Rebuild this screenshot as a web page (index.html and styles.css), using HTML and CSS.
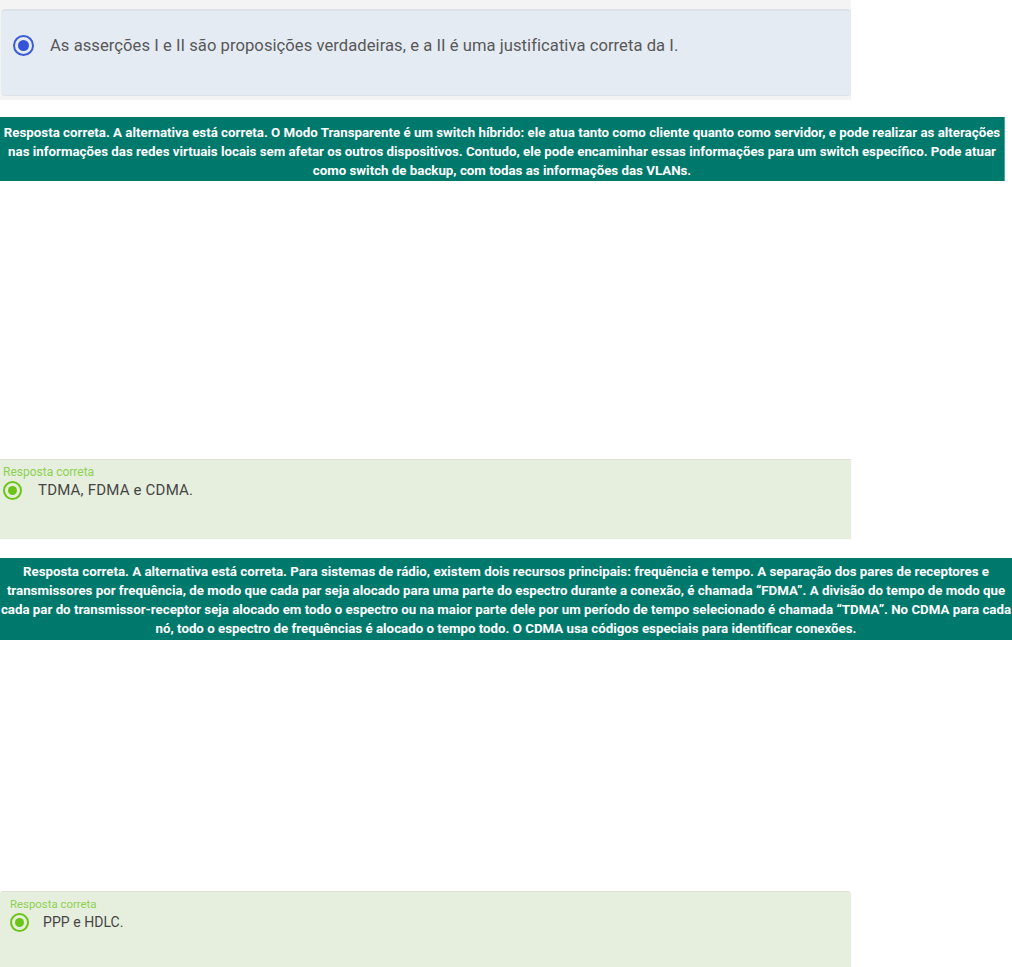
FILE: index.html
```html
<!DOCTYPE html>
<html lang="pt-BR">
<head>
    <meta charset="UTF-8">
    <meta name="viewport" content="width=device-width, initial-scale=1.0">
    <title>Feedback das questões</title>
    <link rel="stylesheet" href="styles.css">
</head>
<body>
    <div class="question-panel">
        <div class="alt-card">
            <span class="radio radio-blue"></span>
            <span class="alt-text">As asserções I e II são proposições verdadeiras, e a II é uma justificativa correta da I.</span>
        </div>
    </div>

    <div class="feedback feedback-1">
        Resposta correta. A alternativa está correta. O Modo Transparente é um switch híbrido: ele atua tanto como cliente quanto como servidor, e pode realizar as alterações<br>
        nas informações das redes virtuais locais sem afetar os outros dispositivos. Contudo, ele pode encaminhar essas informações para um switch específico. Pode atuar<br>
        como switch de backup, com todas as informações das VLANs.
    </div>

    <div class="answer answer-1">
        <div class="answer-label">Resposta correta</div>
        <div class="answer-row">
            <span class="radio radio-green"></span>
            <span class="answer-text">TDMA, FDMA e CDMA.</span>
        </div>
    </div>

    <div class="feedback feedback-2">
        Resposta correta. A alternativa está correta. Para sistemas de rádio, existem dois recursos principais: frequência e tempo. A separação dos pares de receptores e<br>
        transmissores por frequência, de modo que cada par seja alocado para uma parte do espectro durante a conexão, é chamada “FDMA”. A divisão do tempo de modo que<br>
        cada par do transmissor-receptor seja alocado em todo o espectro ou na maior parte dele por um período de tempo selecionado é chamada “TDMA”. No CDMA para cada<br>
        nó, todo o espectro de frequências é alocado o tempo todo. O CDMA usa códigos especiais para identificar conexões.
    </div>

    <div class="answer answer-2">
        <div class="answer-label">Resposta correta</div>
        <div class="answer-row">
            <span class="radio radio-green"></span>
            <span class="answer-text">PPP e HDLC.</span>
        </div>
    </div>
</body>
</html>
```

FILE: styles.css
```css
* {
    margin: 0;
    padding: 0;
    box-sizing: border-box;
}

body {
    font-family: Roboto, 'Liberation Sans', Arial, sans-serif;
    background: #fff;
    color: #444;
    width: 1012px;
}

.question-panel {
    width: 851px;
    background: #f4f4f4;
    padding: 9px 0 4px 1px;
}

.alt-card {
    display: flex;
    align-items: flex-start;
    gap: 16px;
    height: 87px;
    padding: 24px 12px;
    background: #e5ebf3;
    border-top: 2px solid #dde2e8;
    border-bottom: 1px solid #dfe3e8;
    border-radius: 4px;
}

.alt-text {
    font-size: 16.6px;
    line-height: 21px;
    color: #585858;
    letter-spacing: 0.05px;
}

.radio {
    flex: none;
    display: block;
    border-radius: 50%;
    position: relative;
}

.radio::after {
    content: '';
    position: absolute;
    border-radius: 50%;
}

.radio-blue {
    width: 21px;
    height: 21px;
    border: 2px solid #3b5bdb;
}

.radio-blue::after {
    left: 3px;
    top: 3px;
    width: 11px;
    height: 11px;
    background: #3353d8;
}

.radio-green {
    width: 19px;
    height: 19px;
    border: 2px solid #6cc417;
}

.radio-green::after {
    left: 3px;
    top: 3px;
    width: 9px;
    height: 9px;
    background: #6cc417;
}

.feedback {
    background: #00796d;
    color: #fff;
    font-weight: bold;
    font-size: 13.3px;
    line-height: 19px;
    text-align: center;
    white-space: nowrap;
}

.feedback-1 {
    width: 1005px;
    margin-top: 17px;
    padding: 6px 0 1px;
    border-right: 1px solid #4aa79d;
}

.feedback-2 {
    width: 1012px;
    margin-top: 19px;
    padding: 4px 0 2px;
}

.answer {
    width: 851px;
    background: #e6efdd;
    border-top: 1px solid #dcdfd6;
}

.answer-1 {
    margin-top: 278px;
    height: 80px;
    padding: 5px 3px;
}

.answer-2 {
    margin-top: 251px;
    height: 76px;
    padding: 5px 10px;
    border-radius: 4px 4px 0 0;
}

.answer-label {
    font-size: 12px;
    line-height: 14px;
    color: #8dd052;
}

.answer-2 .answer-label {
    font-size: 11.4px;
}

.answer-row {
    display: flex;
    align-items: center;
    gap: 16px;
    margin-top: 2px;
}

.answer-2 .answer-row {
    gap: 14px;
}

.answer-text {
    font-size: 15px;
    line-height: 19px;
    color: #454545;
    letter-spacing: 0.2px;
}

.answer-2 .answer-text {
    font-size: 14px;
    letter-spacing: 0.05px;
}
```
